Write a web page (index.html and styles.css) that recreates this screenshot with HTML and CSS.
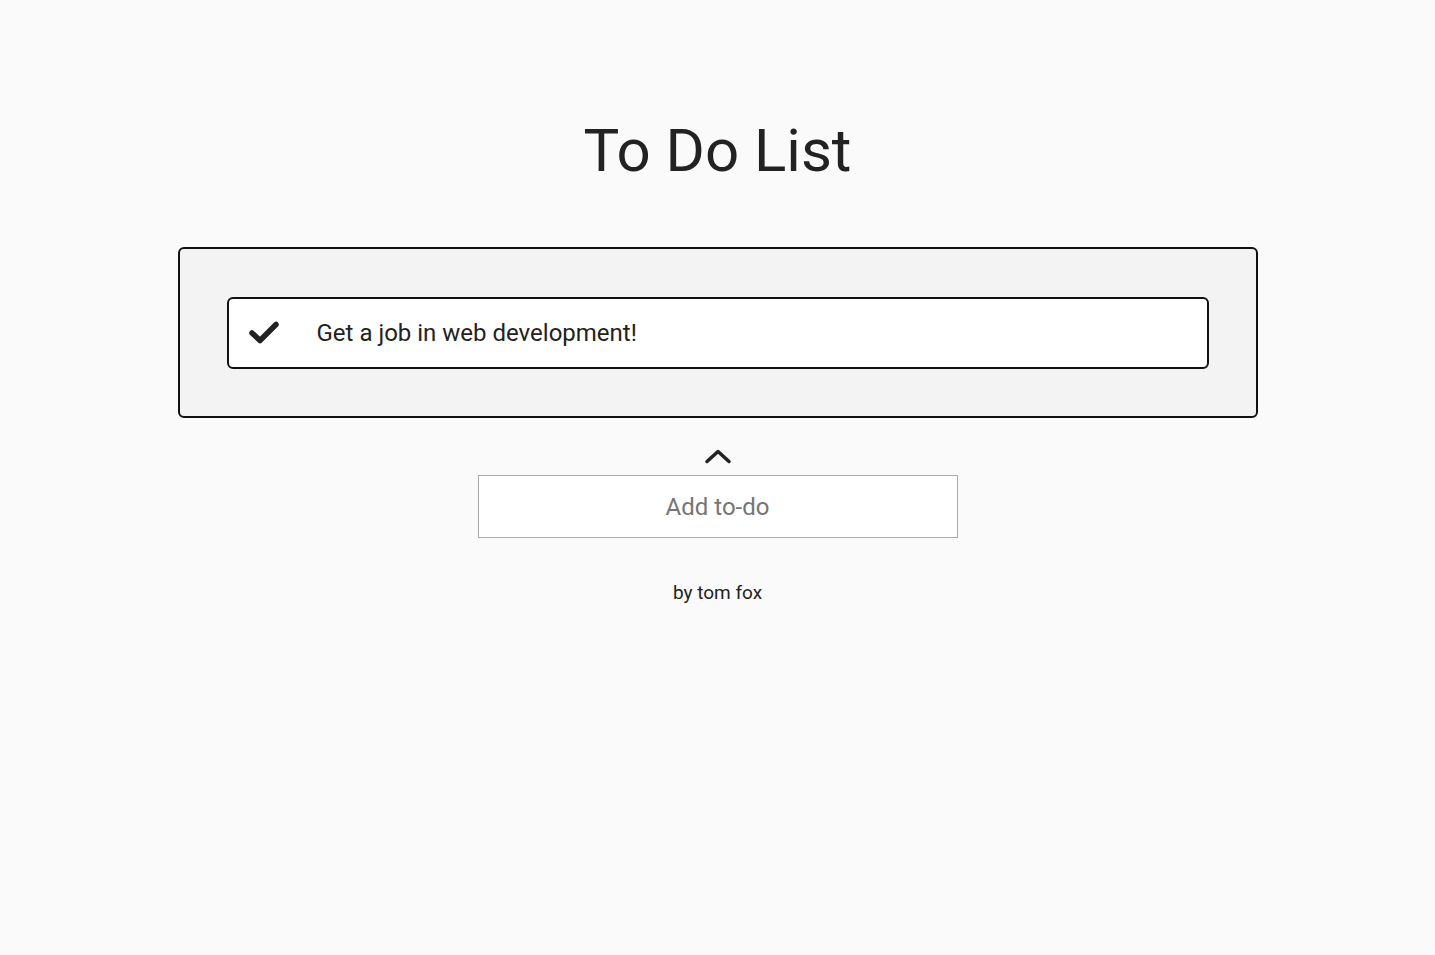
FILE: index.html
```html
<!DOCTYPE html>
<html>
<head>
<meta charset="utf-8">
<link rel="stylesheet" href="styles.css">
</head>
<body>
<main class="app">
  <h1 class="title">To Do List</h1>
  <section class="list">
    <div class="item">
      <svg class="check" width="30" height="24" viewBox="0 0 30 24"><path d="M3 12 L11 19.5 L27 3.5" fill="none" stroke="#222" stroke-width="5.5" stroke-linecap="round" stroke-linejoin="round"/></svg>
      <span class="item-text">Get a job in web development!</span>
    </div>
  </section>
  <svg class="chevron" width="28" height="18" viewBox="0 0 28 18"><path d="M3 14.5 L14 4.5 L25 14.5" fill="none" stroke="#222" stroke-width="3.5" stroke-linecap="round" stroke-linejoin="round"/></svg>
  <input class="add" type="text" placeholder="Add to-do">
  <p class="credit">by tom fox</p>
</main>
</body>
</html>
```
FILE: styles.css
```css
html, body {
  margin: 0;
  padding: 0;
  background: #fafafa;
}
body {
  font-family: Roboto, "Liberation Sans", sans-serif;
  color: #222;
}
.app {
  display: flex;
  flex-direction: column;
  align-items: center;
  padding-top: 114px;
}
.title {
  margin: 0;
  font-size: 60px;
  font-weight: 400;
  line-height: 74px;
  color: #222;
}
.list {
  margin-top: 59px;
  width: 1080px;
  box-sizing: border-box;
  border: 2px solid #111;
  border-radius: 6px;
  background: #f3f3f3;
  padding: 48px 47px 47px;
}
.item {
  display: flex;
  align-items: center;
  height: 72px;
  box-sizing: border-box;
  border: 2px solid #111;
  border-radius: 6px;
  background: #fff;
  padding-left: 20px;
}
.check {
  display: block;
  flex: none;
}
.item-text {
  margin-left: 38px;
  font-size: 24px;
  color: #222;
}
.chevron {
  display: block;
  margin-top: 29px;
}
.add {
  margin-top: 10px;
  width: 480px;
  height: 63px;
  box-sizing: border-box;
  border: 1px solid #aaa;
  background: #fff;
  font-family: Roboto, "Liberation Sans", sans-serif;
  font-size: 24px;
  text-align: center;
  outline: none;
  padding: 0;
}
.add::placeholder {
  color: #757575;
}
.credit {
  margin: 43px 0 0;
  font-size: 19px;
  color: #222;
}
```
